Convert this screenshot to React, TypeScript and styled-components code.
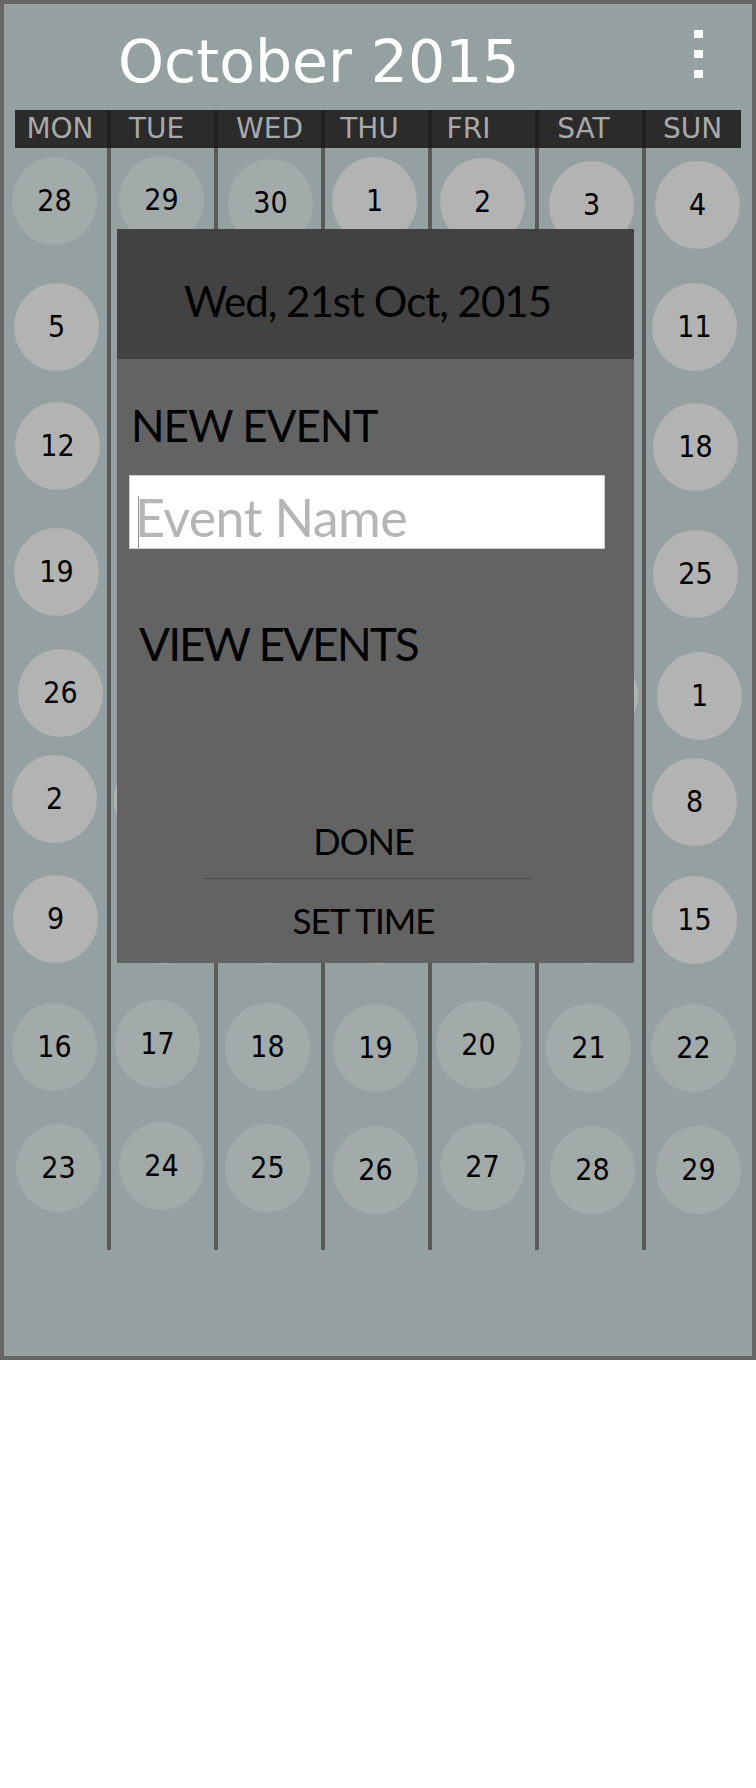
import React from "react";
import styled, { createGlobalStyle } from "styled-components";

const GlobalStyle = createGlobalStyle`
  html, body { margin: 0; padding: 0; background: #ffffff; }
  #root { width: 756px; }
  * { box-sizing: border-box; }
`;

const Frame = styled.div`
  width: 756px;
  height: 1360px;
  border: 4px solid #666666;
  background: #95a1a1;
  display: flex;
  flex-direction: column;
`;

const TopBar = styled.header`
  height: 106px;
  flex: none;
  display: flex;
  align-items: flex-start;
  padding: 29px 49px 0 114px;
`;

const Title = styled.h1`
  margin: 0;
  font-family: "DejaVu Sans", "Liberation Sans", sans-serif;
  font-weight: normal;
  font-size: 58.5px;
  line-height: 59px;
  color: #ffffff;
`;

const Kebab = styled.div`
  margin-left: auto;
  margin-top: -3px;
  display: flex;
  flex-direction: column;
  gap: 12px;
`;

const KebabDot = styled.span`
  display: block;
  width: 9px;
  height: 8px;
  background: #ffffff;
`;

const Calendar = styled.section`
  position: relative;
  flex: none;
  height: 1140px;
  background: repeating-linear-gradient(
        to right,
        transparent 0 103px,
        #5a5a5a 103px 107px
      )
      0 0 / 642px 100% no-repeat;
`;

const HeaderBand = styled.div`
  margin: 0 11px;
  height: 38px;
  display: grid;
  grid-template-columns: 94px repeat(5, 107px) 1fr;
  align-items: center;
  background: repeating-linear-gradient(
        to right,
        transparent 0 103px,
        #1f1f1f 103px 107px
      )
      -11px 0 / 642px 100% no-repeat,
    #2b2b2b;
`;

const DayLabel = styled.div<{ $dx: number }>`
  font-family: "DejaVu Sans", "Liberation Sans", sans-serif;
  font-size: 28px;
  line-height: 28px;
  color: #a9a9a9;
  text-align: center;
  transform: translateX(${(p) => p.$dx}px);
`;

const WeekRow = styled.div<{ $gap: number }>`
  display: grid;
  grid-template-columns: repeat(7, 107px);
  justify-items: center;
  height: 88px;
  margin: ${(p) => p.$gap}px 0 0 -2px;
`;

const DayCircle = styled.div<{ $dx: number; $dy: number; $faded: boolean }>`
  width: 85px;
  height: 88px;
  border-radius: 50%;
  background: ${(p) => (p.$faded ? "#a3aaaa" : "#b3b3b3")};
  display: flex;
  align-items: center;
  justify-content: center;
  transform: translate(${(p) => p.$dx}px, ${(p) => p.$dy}px);
  font-family: "DejaVu Sans Condensed", "DejaVu Sans", sans-serif;
  font-stretch: condensed;
  font-size: 30px;
  line-height: 30px;
  color: #000000;
`;

const Modal = styled.div`
  position: absolute;
  left: 113px;
  top: 119px;
  width: 517px;
  height: 734px;
  z-index: 1;
  display: flex;
  flex-direction: column;
  background: #636363;
`;

const ModalHeader = styled.div`
  flex: none;
  height: 130px;
  padding: 51px 16px 0 0;
  background: #424242;
  text-align: center;
  font-family: Lato, "Open Sans", sans-serif;
  font-size: 42px;
  line-height: 42px;
  letter-spacing: -1px;
  color: #000000;
`;

const ModalBody = styled.div`
  flex: 1;
  display: flex;
  flex-direction: column;
  padding: 44px 29px 25px 12px;
`;

const SectionTitle = styled.h2<{ $size: number; $indent: number; $top: number; $track: number }>`
  margin: ${(p) => p.$top}px 0 0 ${(p) => p.$indent}px;
  font-family: Lato, "Open Sans", sans-serif;
  font-weight: normal;
  font-size: ${(p) => p.$size}px;
  line-height: ${(p) => p.$size}px;
  letter-spacing: ${(p) => p.$track}px;
  color: #000000;
`;

const Field = styled.div`
  margin-top: 28px;
  height: 74px;
  background: #ffffff;
  border: 1px solid #cfcfcf;
  display: flex;
  align-items: center;
  padding: 10px 0 0 8px;
`;

const Caret = styled.span`
  flex: none;
  align-self: flex-end;
  width: 1px;
  height: 52px;
  background: #8f8f8f;
`;

const Placeholder = styled.span`
  margin-left: -4px;
  font-family: Lato, "Open Sans", sans-serif;
  font-size: 52px;
  line-height: 52px;
  letter-spacing: -0.6px;
  color: #b5b5b5;
`;

const Footer = styled.div`
  margin: auto 74px 0 75px;
  display: flex;
  flex-direction: column;
`;

const FooterButton = styled.button<{ $size: number }>`
  appearance: none;
  background: none;
  border: 0;
  margin: 0;
  padding: 0 8px 0 0;
  text-align: center;
  font-family: Lato, "Open Sans", sans-serif;
  font-size: ${(p) => p.$size}px;
  line-height: ${(p) => p.$size}px;
  letter-spacing: -1px;
  color: #000000;
  cursor: pointer;
`;

const Separator = styled.hr`
  margin: 19px 0 24px;
  border: 0;
  height: 1px;
  background: #4b4b4b;
`;

const dayNames: [string, number][] = [
  ["MON", -2],
  ["TUE", -6],
  ["WED", 0],
  ["THU", -7],
  ["FRI", -15],
  ["SAT", -7],
  ["SUN", 0],
];

/* [day number (0 = covered by the dialog), dx, dy] */
type Cell = [number, number, number];
type Week = { gap: number; faded: number; cells: Cell[] };

const weeks: Week[] = [
  { gap: 11, faded: 3, cells: [[28, -1, -2], [29, -1, -3], [30, 1, 0], [1, -2, -2], [2, -1, -1], [3, 1, 2], [4, 0, 2]] },
  { gap: 36, faded: 0, cells: [[5, 1, 0], [0, 0, 0], [0, 0, 0], [0, 0, 0], [0, 0, 0], [0, 0, 0], [11, -3, 0]] },
  { gap: 31, faded: 0, cells: [[12, 2, 0], [0, 0, 0], [0, 0, 0], [0, 0, 0], [0, 0, 0], [0, 0, 0], [18, -2, 1]] },
  { gap: 39, faded: 0, cells: [[19, 1, -1], [0, 0, 0], [0, 0, 0], [0, 0, 0], [0, 0, 0], [0, 0, 0], [25, -2, 1]] },
  { gap: 34, faded: 0, cells: [[26, 5, -2], [0, 0, 0], [0, 0, 0], [0, 0, 0], [0, 0, 0], [0, 5, 0], [1, 2, 1]] },
  { gap: 17, faded: 0, cells: [[2, -1, -1], [0, -6, 0], [0, 0, 0], [0, 0, 0], [0, 0, 0], [0, 0, 0], [8, -3, 2]] },
  { gap: 32, faded: 0, cells: [[9, 0, -1], [0, 0, 0], [0, 0, 0], [0, 0, 0], [0, 0, 0], [0, 0, 0], [15, -3, 0]] },
  { gap: 39, faded: 7, cells: [[16, -1, 0], [17, -5, -3], [18, -2, 0], [19, -1, 1], [20, -5, -2], [21, -2, 1], [22, -4, 1]] },
  { gap: 33, faded: 7, cells: [[23, 3, 0], [24, -1, -2], [25, -2, 0], [26, -1, 2], [27, -1, -1], [28, 2, 2], [29, 1, 2]] },
];

export default function App() {
  return (
    <>
      <GlobalStyle />
      <Frame>
        <TopBar>
          <Title>October 2015</Title>
          <Kebab aria-label="More options">
            <KebabDot />
            <KebabDot />
            <KebabDot />
          </Kebab>
        </TopBar>
        <Calendar>
          <HeaderBand>
            {dayNames.map(([name, dx]) => (
              <DayLabel key={name} $dx={dx}>
                {name}
              </DayLabel>
            ))}
          </HeaderBand>
          {weeks.map((week, wi) => (
            <WeekRow key={wi} $gap={week.gap}>
              {week.cells.map(([n, dx, dy], ci) => (
                <DayCircle key={ci} $dx={dx} $dy={dy} $faded={ci < week.faded}>
                  {n > 0 ? n : null}
                </DayCircle>
              ))}
            </WeekRow>
          ))}
          <Modal role="dialog">
            <ModalHeader>Wed, 21st Oct, 2015</ModalHeader>
            <ModalBody>
              <SectionTitle $size={44} $indent={2} $top={0} $track={-1}>
                NEW EVENT
              </SectionTitle>
              <Field>
                <Caret />
                <Placeholder>Event Name</Placeholder>
              </Field>
              <SectionTitle $size={46} $indent={10} $top={72} $track={-2}>
                VIEW EVENTS
              </SectionTitle>
              <Footer>
                <FooterButton $size={36}>DONE</FooterButton>
                <Separator />
                <FooterButton $size={35}>SET TIME</FooterButton>
              </Footer>
            </ModalBody>
          </Modal>
        </Calendar>
      </Frame>
    </>
  );
}
